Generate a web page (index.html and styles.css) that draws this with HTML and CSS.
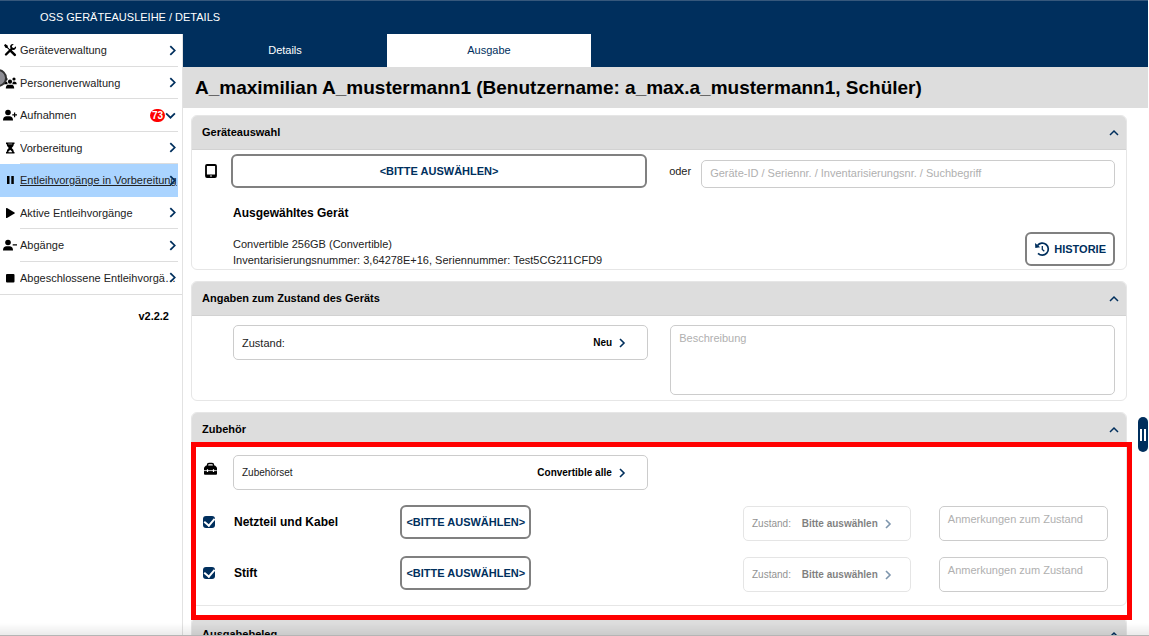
FILE: index.html
```html
<!DOCTYPE html>
<html lang="de">
<head>
<meta charset="utf-8">
<meta name="viewport" content="width=device-width, initial-scale=1">
<title>OSS Geräteausleihe / Details</title>
<link rel="stylesheet" href="styles.css">
</head>
<body>
<svg class="sprite" aria-hidden="true">
  <symbol id="right" viewBox="0 0 10 10"><path d="M3 1l4 4-4 4" fill="none" stroke="currentColor" stroke-width="1.6"/></symbol>
  <symbol id="up" viewBox="0 0 10 10"><path d="M1 8l4-4 4 4" fill="none" stroke="currentColor" stroke-width="1.5"/></symbol>
  <symbol id="down" viewBox="0 0 10 10"><path d="M1 3l4 4 4-4" fill="none" stroke="currentColor" stroke-width="1.6"/></symbol>
</svg>
<header class="topbar">OSS GERÄTEAUSLEIHE / DETAILS</header>
<div class="layout">
  <aside class="sidebar">
    <nav class="nav" aria-label="Hauptmenü">
      <a class="nav-item" href="#geraete">
        <svg class="nav-icon" viewBox="0 0 14 14"><path d="M3 11.500L9 5.500" stroke="currentColor" stroke-width="2.4" stroke-linecap="round"/><path d="M13 3.200L11 5 9 4.800 8.900 3 10.800 1C8.500.4 6.500 2.300 7.200 4.600L9.300 6.800c2.300.7 4.400-1.300 3.700-3.600z" fill="currentColor"/><path d="M1 2.200L2.300 1l2.500 1.800v1.500l2.500 2.500 1.300.1 4.100 4.100a1 1 0 0 1-1.800 1.800L6.800 8.700l-.2-1.200L4 5H2.700z" fill="currentColor"/></svg>
        <span class="nav-text">Geräteverwaltung</span><svg class="nav-arrow" viewBox="0 0 10 10"><use href="#right"/></svg></a>
      <a class="nav-item" href="#personen">
        <svg class="nav-icon" viewBox="0 0 14 14"><g fill="currentColor"><circle cx="3" cy="3" r="1.600"/><circle cx="11" cy="3" r="1.600"/><circle cx="7" cy="5.700" r="2.100"/><path d="M.3 8.200Q.3 5.600 3 5.500L4.200 6Q4.200 7.500 5 8.200zM13.700 8.200Q13.700 5.600 11 5.500L9.800 6Q9.800 7.500 9 8.200zM2.800 12.500Q2.800 9 5.500 8.800h3q2.700.2 2.700 3.700z"/></g></svg>
        <span class="nav-text">Personenverwaltung</span><svg class="nav-arrow" viewBox="0 0 10 10"><use href="#right"/></svg></a>
      <a class="nav-item" href="#aufnahmen">
        <svg class="nav-icon" viewBox="0 0 14 14"><g fill="currentColor"><circle cx="5" cy="4.500" r="2.800"/><path d="M0 12.500Q0 8.700 3 8.300h4q3 .4 3 4.200zM11 4.500h1.200v1.700H14v1.200h-1.800v1.800H11V7.400H9.300V6.200H11z"/></g></svg>
        <span class="nav-text">Aufnahmen</span><span class="badge">73</span><svg class="nav-arrow nav-arrow-down" viewBox="0 0 10 10"><use href="#down"/></svg></a>
      <a class="nav-item" href="#vorbereitung">
        <svg class="nav-icon" viewBox="0 0 14 14"><path d="M3 1.500h8.500V3h-.6Q10.800 5.600 8.700 7q2.100 1.400 2.200 4h.6v1.500H3V11h.6q.1-2.600 2.200-4Q3.700 5.600 3.600 3H3z" fill="currentColor"/><path d="M5.200 3h4M5.500 11l1.700-2L9 11z" stroke="#fff" stroke-width=".5" fill="#fff"/></svg>
        <span class="nav-text">Vorbereitung</span><svg class="nav-arrow" viewBox="0 0 10 10"><use href="#right"/></svg></a>
      <a class="nav-item nav-active" href="#entleih" aria-current="page">
        <svg class="nav-icon" viewBox="0 0 14 14"><path d="M4 3h2.500v8H4zM8.300 3h2.500v8H8.300z" fill="currentColor"/></svg>
        <span class="nav-text">Entleihvorgänge in Vorbereitung</span><svg class="nav-arrow" viewBox="0 0 10 10"><use href="#right"/></svg></a>
      <a class="nav-item" href="#aktiv">
        <svg class="nav-icon" viewBox="0 0 14 14"><path d="M3 2.600q0-1 1-.5l7.500 4.400q.8.500 0 1L4 11.900q-1 .5-1-.5z" fill="currentColor"/></svg>
        <span class="nav-text">Aktive Entleihvorgänge</span><svg class="nav-arrow" viewBox="0 0 10 10"><use href="#right"/></svg></a>
      <a class="nav-item" href="#abgaenge">
        <svg class="nav-icon" viewBox="0 0 14 14"><g fill="currentColor"><circle cx="5" cy="4.500" r="2.800"/><path d="M0 12.500Q0 8.700 3 8.300h4q3 .4 3 4.200zM9.700 6.200H14v1.200H9.700z"/></g></svg>
        <span class="nav-text">Abgänge</span><svg class="nav-arrow" viewBox="0 0 10 10"><use href="#right"/></svg></a>
      <a class="nav-item" href="#abgeschlossen">
        <svg class="nav-icon" viewBox="0 0 14 14"><rect x="3" y="3" width="8.500" height="8.500" rx="1" fill="currentColor"/></svg>
        <span class="nav-text">Abgeschlossene Entleihvorgänge</span><svg class="nav-arrow" viewBox="0 0 10 10"><use href="#right"/></svg></a>
    </nav>
    <p class="version">v2.2.2</p>
    <span class="knob"></span>
  </aside>
  <main class="main">
    <div class="tabs" role="tablist">
      <button class="tab" type="button" role="tab" aria-selected="false">Details</button>
      <button class="tab tab-active" type="button" role="tab" aria-selected="true">Ausgabe</button>
    </div>
    <h1 class="title">A_maximilian A_mustermann1 (Benutzername: a_max.a_mustermann1, Schüler)</h1>
    <div class="cards">
      <section class="card">
        <h2 class="card-head">Geräteauswahl<svg class="chevron" viewBox="0 0 10 10"><use href="#up"/></svg></h2>
        <div class="card-body device">
          <svg class="row-icon tablet" viewBox="0 0 16 16"><rect x="3" y="2" width="10" height="12" rx="1" fill="none" stroke="#000" stroke-width="1.800"/><path d="M3 11.500h10V14H3z"/><circle cx="8" cy="13" r=".8" fill="#fff"/></svg>
          <button class="btn" type="button">&lt;BITTE AUSWÄHLEN&gt;</button>
          <div class="search">
            <label for="suche">oder</label>
            <input class="box" id="suche" type="text" placeholder="Geräte-ID / Seriennr. / Inventarisierungsnr. / Suchbegriff">
          </div>
          <div class="chosen">
            <div>
              <h3 class="strong">Ausgewähltes Gerät</h3>
              <p class="info">Convertible 256GB (Convertible)<br>Inventarisierungsnummer: 3,64278E+16, Seriennummer: Test5CG211CFD9</p>
            </div>
            <button class="btn history" type="button"><svg viewBox="0 0 16 16"><path d="M3.500 4.500A6 6 0 1 1 4 12.300" fill="none" stroke="currentColor" stroke-width="1.700"/><path d="M1 2l.3 5 4.900-.7z" fill="currentColor"/><path d="M8.300 5v3.500l2 1.800" fill="none" stroke="currentColor" stroke-width="1.300"/></svg>HISTORIE</button>
          </div>
        </div>
      </section>
      <section class="card">
        <h2 class="card-head">Angaben zum Zustand des Geräts<svg class="chevron" viewBox="0 0 10 10"><use href="#up"/></svg></h2>
        <div class="card-body condition">
          <div class="box picker">
            <label class="picker-label" for="zustand">Zustand:</label>
            <select id="zustand"><option>Neu</option></select>
            <svg viewBox="0 0 10 10"><use href="#right"/></svg>
          </div>
          <textarea class="box description" placeholder="Beschreibung" aria-label="Beschreibung"></textarea>
        </div>
      </section>
      <section class="card marked">
        <h2 class="card-head">Zubehör<svg class="chevron" viewBox="0 0 10 10"><use href="#up"/></svg></h2>
        <div class="card-body">
          <div class="set">
            <svg class="row-icon case" viewBox="0 0 16 16"><path d="M4.500 5V4q0-1.500 1.500-1.500h3Q10.500 2.500 10.500 4v1" fill="none" stroke="#000" stroke-width="1.400"/><path d="M3 4.500h9l2 2V13q0 .8-1 .8H2q-1 0-1-.8V6.500z"/><path d="M1 9.600h12.800" stroke="#fff" stroke-width=".8"/><path d="M4.500 8.200v2.800M10.500 8.200v2.800" stroke="#fff" stroke-width="1.200"/></svg>
            <div class="box picker">
              <label for="set">Zubehörset</label>
              <select id="set"><option>Convertible alle</option></select>
              <svg viewBox="0 0 10 10"><use href="#right"/></svg>
            </div>
          </div>
          <div class="part">
            <input class="check" type="checkbox" id="netzteil" checked>
            <label class="strong" for="netzteil">Netzteil und Kabel</label>
            <button class="btn" type="button">&lt;BITTE AUSWÄHLEN&gt;</button>
            <div class="box picker disabled">
              <label for="z1">Zustand:</label>
              <select id="z1" disabled><option>Bitte auswählen</option></select>
              <svg viewBox="0 0 10 10"><use href="#right"/></svg>
            </div>
            <textarea class="box notes" placeholder="Anmerkungen zum Zustand" aria-label="Anmerkungen zu Netzteil und Kabel"></textarea>
          </div>
          <div class="part">
            <input class="check" type="checkbox" id="stift" checked>
            <label class="strong" for="stift">Stift</label>
            <button class="btn" type="button">&lt;BITTE AUSWÄHLEN&gt;</button>
            <div class="box picker disabled">
              <label for="z2">Zustand:</label>
              <select id="z2" disabled><option>Bitte auswählen</option></select>
              <svg viewBox="0 0 10 10"><use href="#right"/></svg>
            </div>
            <textarea class="box notes" placeholder="Anmerkungen zum Zustand" aria-label="Anmerkungen zu Stift"></textarea>
          </div>
        </div>
      </section>
      <section class="card">
        <h2 class="card-head">Ausgabebeleg<svg class="chevron" viewBox="0 0 10 10"><use href="#up"/></svg></h2>
      </section>
    </div>
    <button class="handle" type="button" aria-label="Seitenleiste"></button>
  </main>
</div>
</body>
</html>
```
FILE: styles.css
```css
* { box-sizing: border-box; }
body {
  margin: 0;
  height: 100vh;
  display: flex;
  flex-direction: column;
  overflow: hidden;
  padding-right: 1px;
  background: #fff;
  color: #222;
  font: 11px/16px "Liberation Sans", Arial, sans-serif;
}
h1, h2, h3, p { margin: 0; }
button, input, textarea, select { font: inherit; color: inherit; margin: 0; }
.sprite { position: absolute; width: 0; height: 0; }
.topbar {
  flex: none;
  background: #002f5d;
  border-top: 1px solid #36587c;
  color: #fff;
  padding: 8px 40px 9px;
}
.layout { flex: 1; min-height: 0; display: flex; }

.sidebar {
  position: relative;
  flex: none;
  width: 183px;
  border-right: 1px solid #e2e2e2;
}
.nav {
  display: grid;
  grid-template-columns: minmax(0, 1fr);
  grid-template-rows: repeat(8, 1fr);
  min-height: 261px;
  border-bottom: 1px solid #ddd;
}
.nav-item {
  position: relative;
  display: flex;
  align-items: center;
  gap: 3px;
  margin-right: 4px;
  padding: 0 1px 0 3px;
  color: #222;
  text-decoration: none;
}
.nav-item:not(:last-child)::after {
  content: "";
  position: absolute;
  left: 20px;
  right: 0;
  bottom: 0;
  border-bottom: 1px solid #ddd;
}
.nav-icon { flex: none; width: 14px; height: 14px; color: #000; }
.nav-text { flex: 1; min-width: 0; overflow: hidden; text-overflow: ellipsis; white-space: nowrap; }
.nav-arrow { position: absolute; right: 0; width: 11px; height: 11px; color: #002f5d; }
.nav-arrow-down { right: 2px; }
.nav-active { background: #aad4ff; }
.nav-item.nav-active::after { border-color: #aad4ff; }
.nav-active .nav-text { text-decoration: underline; }
.badge {
  margin-right: 12px;
  padding: 0 2px;
  border-radius: 7px;
  background: #f00;
  color: #fff;
  font-weight: bold;
  font-size: 10px;
  line-height: 13px;
}
.version { padding: 13px 13px; text-align: right; font-weight: bold; color: #000; }
.knob {
  position: absolute;
  left: -11px;
  top: 35px;
  width: 18px;
  height: 18px;
  border: 2px solid #333;
  border-radius: 50%;
  background: #8d8d94;
}

.main { position: relative; flex: 1; min-width: 0; display: flex; flex-direction: column; }
.tabs { flex: none; display: flex; background: #002f5d; }
.tab {
  width: 204px;
  height: 33px;
  border: 0;
  padding: 0 0 2px;
  background: #002f5d;
  color: #fff;
}
.tab-active { background: #fff; color: #002f5d; }
.title {
  flex: none;
  padding: 9px 12px 8px;
  background: #ddd;
  color: #000;
  font-size: 19px;
  line-height: 24px;
}
.cards {
  flex: 1;
  min-height: 0;
  display: flex;
  flex-direction: column;
  gap: 11px;
  padding: 7px 21px 0 8px;
}
.card { flex: none; border: 1px solid #e6e6e6; border-radius: 6px; }
.card-head {
  display: flex;
  align-items: center;
  justify-content: space-between;
  padding: 8px 7px 9px 10px;
  border-bottom: 1px solid #d2d2d2;
  border-radius: 5px 5px 0 0;
  background: #ddd;
  color: #000;
  font-size: 11px;
  line-height: 16px;
}
.chevron { width: 10px; height: 10px; color: #002f5d; }
.card-body { padding: 0 11px; }
.box {
  border: 1px solid #ccc;
  border-radius: 5px;
  background: #fff;
}
.box::placeholder { color: #b0b0b0; opacity: 1; }
.btn {
  height: 34px;
  border: 2px solid #808080;
  border-radius: 6px;
  padding: 0 4px 1px;
  background: #fff;
  color: #002f5d;
  font-weight: bold;
  white-space: nowrap;
}
.strong { font-size: 12px; font-weight: bold; color: #000; }
.row-icon { width: 16px; height: 16px; }
.picker {
  display: flex;
  align-items: center;
  gap: 5px;
  height: 35px;
  padding: 0 20px 0 8px;
  font-size: 10px;
}
.picker-label { font-size: 11px; }
.picker select {
  flex: 1;
  min-width: 0;
  appearance: none;
  border: 0;
  padding: 0;
  background: none;
  color: #000;
  font-weight: bold;
  text-align: right;
  text-align-last: right;
}
.picker svg { flex: none; width: 10px; height: 10px; color: #002f5d; }
.disabled { opacity: 0.5; padding-right: 17px; }
.disabled select { opacity: 1; }

.device {
  display: grid;
  grid-template-columns: 28px minmax(0, 14fr) 22px minmax(0, 15fr);
  align-items: center;
  padding-top: 4px;
  padding-bottom: 1px;
}
.search { grid-column: 4; display: flex; align-items: center; gap: 10px; }
.search .box { flex: 1; min-width: 0; height: 28px; margin-top: 6px; padding: 0 8px 2px; }
.chosen {
  grid-column: 2 / 5;
  display: flex;
  justify-content: space-between;
  align-items: flex-end;
  padding: 17px 0 0 2px;
}
.info { margin-top: 15px; }
.history { display: flex; align-items: center; gap: 4px; margin-bottom: 2px; padding: 0 7px; }
.history svg { width: 16px; height: 16px; }

.condition {
  display: grid;
  grid-template-columns: minmax(0, 14fr) minmax(0, 15fr);
  column-gap: 22px;
  padding: 9px 11px 5px 41px;
}
.description { width: 100%; height: 70px; padding: 4px 8px; resize: none; }

.set { display: grid; grid-template-columns: 30px minmax(0, 14fr) minmax(0, 15fr); padding: 8px 0 0; }
.case { margin-top: 6px; }
.set .picker { margin-right: 11px; }
.part {
  display: grid;
  grid-template-columns: 31px minmax(0, 17fr) minmax(0, 35fr) minmax(0, 20fr) minmax(0, 18fr);
  align-items: center;
  padding-top: 13px;
}
.part:last-child { padding-bottom: 13px; }
.part .btn { justify-self: start; }
.part .picker { margin: 3px 28px 0 0; }
.notes { height: 35px; margin: 3px 7px 0 0; padding: 4px 8px; resize: none; overflow: hidden; }
.check {
  appearance: none;
  width: 12px;
  height: 12px;
  border-radius: 3px;
  background: #002f5d;
  display: grid;
  place-items: center;
}
.check:checked::before {
  content: "";
  width: 5px;
  height: 8px;
  margin-bottom: 2px;
  border: solid #fff;
  border-width: 0 2px 2px 0;
  transform: rotate(40deg);
}
.marked { position: relative; }
.marked::after {
  content: "";
  position: absolute;
  inset: 29px -6px -15px -1px;
  border: 5px solid #f00;
  pointer-events: none;
}
.handle {
  position: absolute;
  right: 0;
  top: 383px;
  width: 10px;
  height: 35px;
  border: 0;
  border-radius: 5px;
  padding: 0;
  background: linear-gradient(#fff, #fff) 2px center / 2px 12px no-repeat, linear-gradient(#fff, #fff) 6px center / 2px 12px no-repeat, #002f5d;
}
.layout::after {
  content: "";
  position: fixed;
  inset: auto 0 0;
  height: 12px;
  border-bottom: 1px solid #b5b5b5;
  background: linear-gradient(transparent, rgba(0, 0, 0, 0.08));
  pointer-events: none;
}
```
